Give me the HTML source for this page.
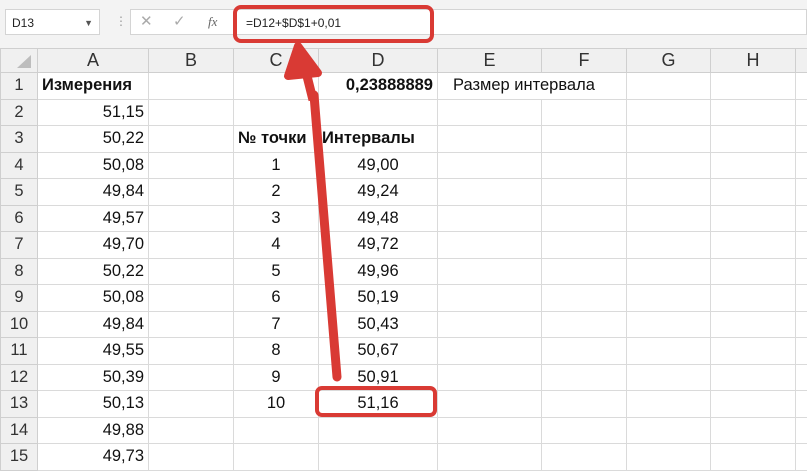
<!DOCTYPE html>
<html><head><meta charset="utf-8"><style>
body{margin:0;width:807px;height:457px;overflow:hidden;background:#fff;font-family:"Liberation Sans",sans-serif;position:relative}
.top{position:absolute;left:0;top:0;width:807px;height:48px;background:#f3f3f3}
.nb{position:absolute;left:5px;top:9px;width:95px;height:26px;background:#fff;border:1px solid #d4d4d4;font-size:12px;line-height:26px;box-sizing:border-box;padding-left:6px;color:#222}
.fb{position:absolute;left:130px;top:9px;width:677px;height:26px;background:#fff;border:1px solid #d4d4d4;box-sizing:border-box}
.ic{position:absolute;top:9px;font-size:15px;color:#aaa;line-height:26px}
.ft{position:absolute;left:246px;top:9px;font-size:12px;line-height:28px;color:#222}
table{position:absolute;left:0;top:48px;width:807px;border-collapse:collapse;table-layout:fixed}
td{border:1px solid #dadada;height:25.5px;padding:0 4px;font-size:16.5px;white-space:nowrap;overflow:visible;color:#111}
tr.h td{height:23px;background:#f0f0f0;text-align:center;color:#333;border-color:#cfcfcf;font-size:18px}
td.r{background:#f0f0f0;text-align:center;color:#333;border-color:#cfcfcf}
.n{text-align:right}.c{text-align:center}.b{font-weight:bold}
</style></head><body>
<div class="top"></div>
<div class="nb">D13<span style="position:absolute;right:6px;font-size:9px;color:#555">▼</span></div>
<div style="position:absolute;left:115px;top:14px;color:#999;font-size:12px">⋮</div>
<div class="fb"></div>
<div class="ic" style="left:140px">✕</div>
<div class="ic" style="left:173px">✓</div>
<div class="ic" style="left:208px;font-family:'Liberation Serif',serif;font-style:italic;color:#666;font-size:13px">fx</div>
<div class="ft">=D12+$D$1+0,01</div>
<table>
<colgroup><col style="width:37px"><col style="width:111px"><col style="width:85px"><col style="width:85px"><col style="width:119px"><col style="width:104px"><col style="width:85px"><col style="width:84px"><col style="width:85px"><col style="width:12px"></colgroup>
<tr class="h"><td style="background:#f0f0f0;padding:0"><svg width="20" height="16" style="display:block;margin-left:12px"><path d="M18 2 L18 15 L4 15 Z" fill="#bdbdbd"/></svg></td><td>A</td><td>B</td><td>C</td><td>D</td><td>E</td><td>F</td><td>G</td><td>H</td><td></td></tr>
<tr><td class="r">1</td><td class="b">Измерения</td><td></td><td></td><td class="n b">0,23888889</td><td colspan="2" style="padding-left:15px">Размер интервала</td><td></td><td></td><td></td></tr>
<tr><td class="r">2</td><td class="n">51,15</td><td></td><td></td><td></td><td></td><td></td><td></td><td></td><td></td></tr>
<tr><td class="r">3</td><td class="n">50,22</td><td></td><td class="b">№ точки</td><td class="b" style="padding-left:3px">Интервалы</td><td></td><td></td><td></td><td></td><td></td></tr>
<tr><td class="r">4</td><td class="n">50,08</td><td></td><td class="c">1</td><td class="c">49,00</td><td></td><td></td><td></td><td></td><td></td></tr>
<tr><td class="r">5</td><td class="n">49,84</td><td></td><td class="c">2</td><td class="c">49,24</td><td></td><td></td><td></td><td></td><td></td></tr>
<tr><td class="r">6</td><td class="n">49,57</td><td></td><td class="c">3</td><td class="c">49,48</td><td></td><td></td><td></td><td></td><td></td></tr>
<tr><td class="r">7</td><td class="n">49,70</td><td></td><td class="c">4</td><td class="c">49,72</td><td></td><td></td><td></td><td></td><td></td></tr>
<tr><td class="r">8</td><td class="n">50,22</td><td></td><td class="c">5</td><td class="c">49,96</td><td></td><td></td><td></td><td></td><td></td></tr>
<tr><td class="r">9</td><td class="n">50,08</td><td></td><td class="c">6</td><td class="c">50,19</td><td></td><td></td><td></td><td></td><td></td></tr>
<tr><td class="r">10</td><td class="n">49,84</td><td></td><td class="c">7</td><td class="c">50,43</td><td></td><td></td><td></td><td></td><td></td></tr>
<tr><td class="r">11</td><td class="n">49,55</td><td></td><td class="c">8</td><td class="c">50,67</td><td></td><td></td><td></td><td></td><td></td></tr>
<tr><td class="r">12</td><td class="n">50,39</td><td></td><td class="c">9</td><td class="c">50,91</td><td></td><td></td><td></td><td></td><td></td></tr>
<tr><td class="r">13</td><td class="n">50,13</td><td></td><td class="c">10</td><td class="c">51,16</td><td></td><td></td><td></td><td></td><td></td></tr>
<tr><td class="r">14</td><td class="n">49,88</td><td></td><td></td><td></td><td></td><td></td><td></td><td></td><td></td></tr>
<tr><td class="r">15</td><td class="n">49,73</td><td></td><td></td><td></td><td></td><td></td><td></td><td></td><td></td></tr>
</table>
<svg width="807" height="457" style="position:absolute;left:0;top:0">
<rect x="235" y="7" width="197" height="34" rx="6" fill="none" stroke="#d93a34" stroke-width="4"/>
<rect x="317" y="388" width="118" height="27" rx="5" fill="none" stroke="#d93a34" stroke-width="4"/>
<path d="M337 377 L314 95" stroke="#d93a34" stroke-width="9" stroke-linecap="round"/>
<path d="M298 46 L288 76 L318 73 Z" fill="#d93a34" stroke="#d93a34" stroke-width="8" stroke-linejoin="round"/>
<path d="M303 60 L313 100" stroke="#d93a34" stroke-width="9"/>
</svg>
</body></html>
